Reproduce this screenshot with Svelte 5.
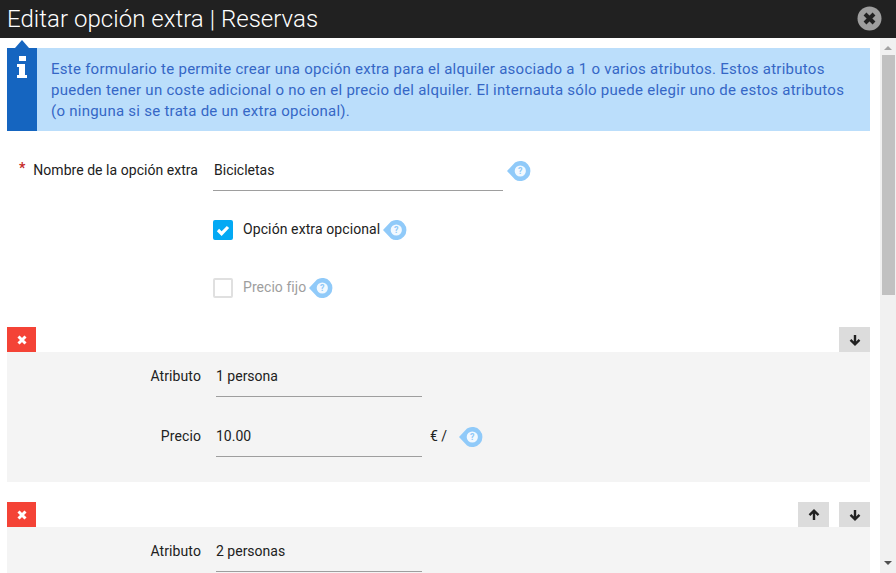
<script>
  const blocks = [
    { attr: '1 persona', price: '10.00', up: false },
    { attr: '2 personas', price: '', up: true }
  ];
  const info = 'Este formulario te permite crear una opción extra para el alquiler asociado a 1 o varios atributos. Estos atributos pueden tener un coste adicional o no en el precio del alquiler. El internauta sólo puede elegir uno de estos atributos (o ninguna si se trata de un extra opcional).';
</script>

{#snippet help()}
  <svg class="help" width="24" height="20" viewBox="0 0 24 20" aria-hidden="true">
    <path d="M0 10 L8 1.6 A10 10 0 1 1 8 18.4 Z" fill="#90caf9" />
    <circle cx="13.3" cy="10" r="5.6" fill="#f2f9ff" />
    <text x="13.3" y="13.2" text-anchor="middle" class="q">?</text>
  </svg>
{/snippet}

{#snippet arrow(up)}
  <svg width="12" height="12" viewBox="0 0 12 12" aria-hidden="true">
    <path d={up ? 'M6 11V2M1.5 6.2 6 1.7l4.5 4.5' : 'M6 1v9M1.5 5.8 6 10.3l4.5-4.5'} fill="none" stroke="#212121" stroke-width="2.4" />
  </svg>
{/snippet}

<div class="dialog">
  <header class="head">
    <h1>Editar opción extra | Reservas</h1>
    <svg class="close" width="25" height="25" viewBox="0 0 25 25" aria-hidden="true">
      <circle cx="12.5" cy="12.5" r="12" fill="#9e9e9e" />
      <path d="M8 8l9 9M17 8l-9 9" stroke="#212121" stroke-width="4" />
    </svg>
  </header>
  <div class="body">
    <main class="content">
      <section class="info">
        <div class="tab">
          <svg width="10" height="22" viewBox="0 0 10 22" aria-hidden="true">
            <path d="M2 0h7v5H2zM0 8h8v11h2v3H0v-3h2v-8H0z" fill="#fff" />
          </svg>
        </div>
        <p>{info}</p>
      </section>

      <div class="top-form">
        <div class="row name-row">
          <label class="name-label"><span class="req">*</span>Nombre de la opción extra</label>
          <div class="input wide">Bicicletas</div>
          {@render help()}
        </div>
        <div class="check-row first">
          <span class="box on">
            <svg width="14" height="12" viewBox="0 0 14 12" aria-hidden="true">
              <path d="M2 6l3.6 3.6L12 3" fill="none" stroke="#fff" stroke-width="3.2" />
            </svg>
          </span>
          <span class="check-label">Opción extra opcional</span>
          {@render help()}
        </div>
        <div class="check-row second">
          <span class="box"></span>
          <span class="check-label muted">Precio fijo</span>
          {@render help()}
        </div>
      </div>

      {#each blocks as b, i}
        <section class="block" class:next={i > 0}>
          <div class="toolbar">
            <button class="del" aria-label="Eliminar">
              <svg width="10" height="10" viewBox="0 0 10 10" aria-hidden="true">
                <path d="M1.5 1.5l7 7M8.5 1.5l-7 7" stroke="#fff" stroke-width="3" />
              </svg>
            </button>
            <div class="moves">
              {#if b.up}<button class="mv" aria-label="Subir">{@render arrow(true)}</button>{/if}
              <button class="mv" aria-label="Bajar">{@render arrow(false)}</button>
            </div>
          </div>
          <div class="panel">
            <div class="row field">
              <span class="flabel">Atributo</span>
              <div class="input small">{b.attr}</div>
            </div>
            {#if b.price}
              <div class="row field">
                <span class="flabel">Precio</span>
                <div class="input small">{b.price}</div>
                <span class="unit">€ /</span>
                {@render help()}
              </div>
            {/if}
          </div>
        </section>
      {/each}
    </main>
    <div class="scrollbar">
      <span class="tri up"></span>
      <span class="thumb"></span>
      <span class="tri down"></span>
    </div>
  </div>
</div>

<style>
  :global(body) {
    margin: 0;
    overflow: hidden;
    background: #fff;
  }
  .dialog {
    width: 896px;
    height: 573px;
    display: flex;
    flex-direction: column;
    overflow: hidden;
    font-family: Roboto, sans-serif;
    font-size: 14px;
    color: #212121;
  }
  .head {
    flex: none;
    height: 38px;
    background: #212121;
    display: flex;
    align-items: center;
    justify-content: space-between;
    padding: 0 14px 0 7px;
  }
  h1 {
    margin: 0;
    font-size: 24px;
    font-weight: 300;
    letter-spacing: 0.04px;
    color: #fff;
  }
  .close { margin-top: -2px; }
  .body {
    flex: 1;
    min-height: 0;
    display: flex;
  }
  .content {
    flex: 1;
    min-width: 0;
    overflow: hidden;
    padding: 10px 10px 0 7px;
  }
  .info {
    position: relative;
    height: 83px;
    display: flex;
    background: #bbdefb;
    color: #3567c6;
  }
  .tab {
    position: relative;
    flex: none;
    width: 30px;
    background: #1565c0;
    display: flex;
    justify-content: center;
    align-items: flex-start;
    padding-top: 8px;
    box-sizing: border-box;
  }
  .tab::before {
    content: '';
    position: absolute;
    left: 8px;
    top: -8px;
    border: 7px solid transparent;
    border-top: 0;
    border-bottom: 8px solid #1565c0;
  }
  .info p {
    margin: 11px 15px 0 14px;
    line-height: 21px;
    font-size: 15px;
    letter-spacing: 0.26px;
  }
  .row { display: flex; align-items: center; }
  .top-form { height: 178px; }
  .name-row { margin-top: 18px; height: 42px; }
  .name-label {
    width: 191px;
    padding-left: 12px;
    box-sizing: border-box;
    display: flex;
    align-items: center;
    white-space: nowrap;
    letter-spacing: 0.04px;
  }
  .req {
    width: 14.5px;
    color: #c62828;
    font-weight: 700;
    margin-top: -5px;
  }
  .input {
    height: 40px;
    line-height: 39px;
    box-sizing: border-box;
    border-bottom: 1px solid #9e9e9e;
    flex: none;
  }
  .wide { width: 290px; margin: 1px 4px 0 15px; padding-left: 1px; }
  .name-row .help { margin-top: 2px; }
  .check-row {
    display: flex;
    align-items: center;
    padding-left: 206px;
    height: 20px;
  }
  .check-row.first { margin-top: 29px; }
  .check-row.second { margin-top: 38px; }
  .box {
    width: 20px;
    height: 20px;
    box-sizing: border-box;
    border: 2px solid #e0e0e0;
    border-radius: 2px;
    display: flex;
    align-items: center;
    justify-content: center;
    flex: none;
  }
  .box.on {
    background: #03a9f4;
    border-color: #03a9f4;
  }
  .check-label { margin-left: 10px; margin-right: 3px; letter-spacing: 0.1px; margin-top: -2px; }
  .muted { color: #9e9e9e; letter-spacing: 0.05px; }
  .help { flex: none; }
  .q {
    font: 700 9px Roboto, sans-serif;
    fill: #90caf9;
  }
  .toolbar {
    height: 25px;
    display: flex;
    justify-content: space-between;
  }
  .block.next { margin-top: 20px; }
  button {
    padding: 0;
    border: 0;
    height: 25px;
    display: flex;
    align-items: center;
    justify-content: center;
  }
  .del { width: 29px; background: #f44336; }
  .moves { display: flex; gap: 10px; }
  .mv { width: 31px; background: #dcdcdc; }
  .panel {
    background: #f4f4f4;
    height: 130px;
    padding-top: 5px;
    box-sizing: border-box;
  }
  .field { height: 40px; margin-bottom: 20px; }
  .flabel {
    width: 194px;
    text-align: right;
    margin-right: 15px;
    margin-top: -2px;
    flex: none;
    letter-spacing: 0.1px;
  }
  .small { width: 206px; padding-left: 0; }
  .unit { margin: -2px 12px 0 8px; }
  .scrollbar {
    flex: none;
    width: 16px;
    background: #f1f1f1;
    position: relative;
    display: flex;
    flex-direction: column;
    align-items: center;
  }
  .thumb {
    width: 13px;
    height: 240px;
    background: #c1c1c1;
    margin-top: 5px;
  }
  .tri {
    width: 0;
    height: 0;
    border-left: 4px solid transparent;
    border-right: 4px solid transparent;
  }
  .tri.up {
    margin-top: 8px;
    border-bottom: 4px solid #a3a3a3;
  }
  .tri.down {
    margin-top: auto;
    margin-bottom: 8px;
    border-top: 4px solid #505050;
  }
</style>
